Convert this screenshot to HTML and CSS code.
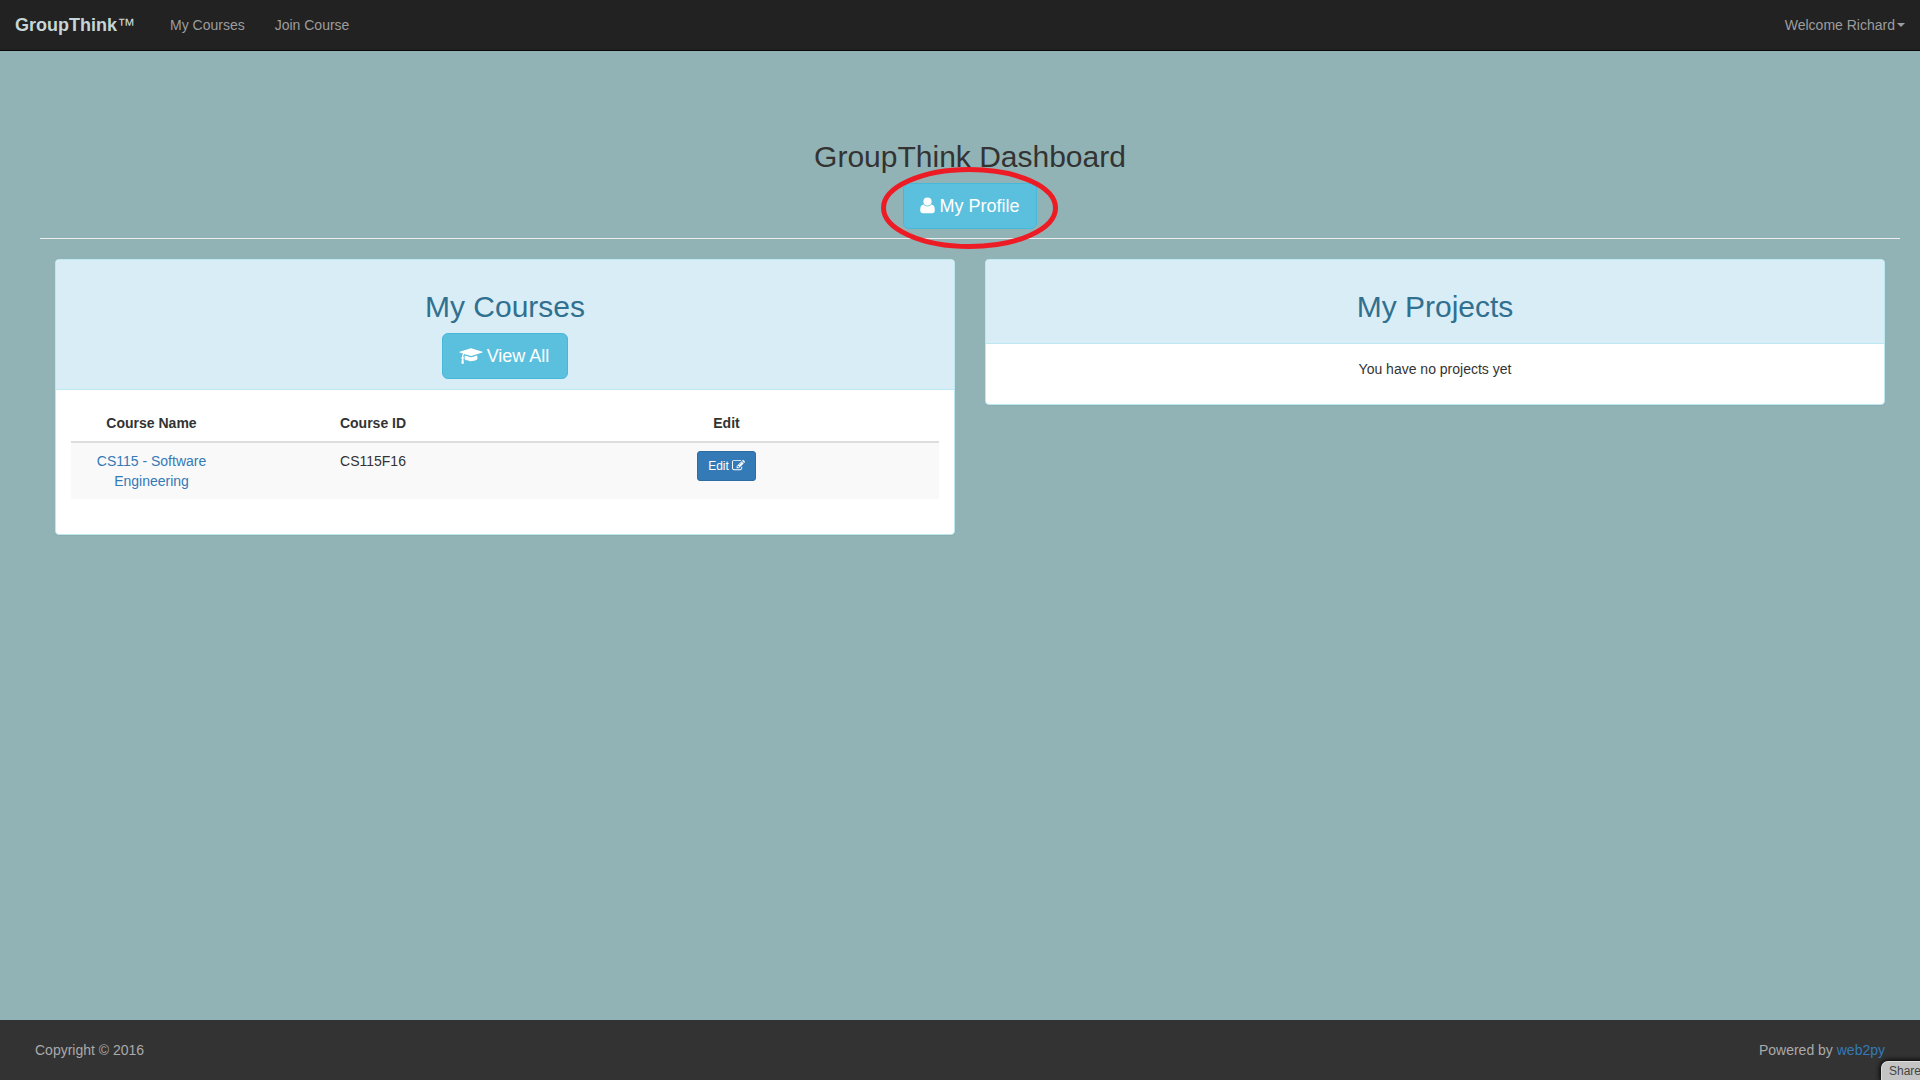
FILE: index.html
```html
<!DOCTYPE html>
<html lang="en">
<head>
<meta charset="utf-8">
<title>GroupThink Dashboard</title>
<link rel="stylesheet" href="styles.css">
</head>
<body>
<nav class="navbar">
  <a class="brand">GroupThink<span class="tm">™</span></a>
  <ul class="nav-links"><li>My Courses</li><li>Join Course</li></ul>
  <div class="user">Welcome Richard<span class="caret"></span></div>
</nav>
<main class="main">
  <header class="hero">
    <h2>GroupThink Dashboard</h2>
    <div class="profile">
      <a class="btn btn-info"><svg class="icon user-icon" width="15" height="17" viewBox="0 0 15 17"><circle cx="7.5" cy="4.6" r="4.1"/><path d="M3.6 7.6C1.2 7.7.2 10 .2 13c0 2.200 1 3.300 2.800 3.300h9c1.800 0 2.800-1.100 2.800-3.300 0-3-1-5.300-3.400-5.400C10.400 8.800 9 9.500 7.500 9.500S4.600 8.800 3.600 7.600z"/></svg>My Profile</a>
      <svg class="marker" width="178" height="84" viewBox="0 0 178 84"><ellipse cx="88.5" cy="41" rx="86" ry="38.5"/></svg>
    </div>
  </header>
  <hr class="rule">
  <div class="row">
    <section class="panel">
      <div class="panel-heading">
        <h2>My Courses</h2>
        <a class="btn btn-info"><svg class="icon" width="24" height="18" viewBox="0 0 2304 1792"><path d="M1774 836l18 316c8 141-287 256-640 256s-648-115-640-256l18-316 574 181c16 5 32 7 48 7s32-2 48-7zM2304 512c0 14-9 26-22 31l-1120 352c-4 1-7 1-10 1s-6 0-10-1L490 689c-57 45-96 155-104 290 37 21 62 61 62 109 0 45-24 84-58 106l58 433c1 9-2 18-8 25s-15 12-24 12H224c-9 0-18-5-24-12s-9-16-8-25l58-433c-34-22-58-61-58-106 0-48 26-89 64-110 7-116 37-240 101-330L22 543C9 538 0 526 0 512s9-26 22-31l1120-352c4-1 7-1 10-1s6 0 10 1l1120 352c13 5 22 17 22 31z"/></svg>View All</a>
      </div>
      <div class="panel-body">
        <table class="table">
          <thead><tr><th class="name">Course Name</th><th class="id">Course ID</th><th>Edit</th></tr></thead>
          <tbody><tr><td><a class="link">CS115 - Software Engineering</a></td><td>CS115F16</td><td><a class="btn btn-edit">Edit<svg width="13" height="13" viewBox="0 0 1792 1792"><path d="M888 1184l116-116-152-152-116 116v56h96v96h56zM1328 464c-9-9-24-8-33 1L945 815c-9 9-10 24-1 33s24 8 33-1l350-350c9-9 10-24 1-33zM1408 1058v190c0 159-129 288-288 288H288C129 1536 0 1407 0 1248V416c0-159 129-288 288-288h832c40 0 80 8 117 25 9 4 16 13 18 23 2 11-1 21-9 29l-49 49c-9 9-21 12-32 8-15-4-30-6-45-6H288c-88 0-160 72-160 160v832c0 88 72 160 160 160h832c88 0 160-72 160-160v-126c0-8 3-16 9-22l64-64c10-10 23-12 35-7s20 16 20 29zM1312 320l288 288-672 672H640V992zM1756 452l-92 92-288-288 92-92c37-37 99-37 136 0l152 152c37 37 37 99 0 136z"/></svg></a></td></tr></tbody>
        </table>
      </div>
    </section>
    <section class="panel">
      <div class="panel-heading"><h2>My Projects</h2></div>
      <div class="panel-body"><p>You have no projects yet</p></div>
    </section>
  </div>
</main>
<footer class="footer">
  <span>Copyright © 2016</span>
  <span>Powered by <a class="link">web2py</a></span>
</footer>
<div class="share">Share</div>
</body>
</html>
```
FILE: styles.css
```css
* { box-sizing: border-box; }
body {
  margin: 0;
  height: 100vh;
  display: flex;
  flex-direction: column;
  overflow: hidden;
  position: relative;
  background: #92b3b5;
  color: #333;
  font: 14px/20px "Liberation Sans", Arial, sans-serif;
}
h2 { margin: 0 0 10px; font-size: 30px; font-weight: 500; line-height: 33px; }
p { margin: 0 0 10px; }
.link { color: #337ab7; }

.navbar {
  display: flex;
  align-items: center;
  height: 51px;
  padding: 0 15px;
  background: #222;
  border-bottom: 1px solid #080808;
  color: #9d9d9d;
}
.brand { width: 155px; font-size: 18px; font-weight: bold; color: #c6d5d5; }
.tm { font-size: 18px; font-weight: normal; }
.nav-links { display: flex; gap: 30px; margin: 0; padding: 0; list-style: none; }
.user { display: flex; align-items: center; margin-left: auto; }
.caret { margin-left: 2px; border: 4px solid transparent; border-top-color: currentColor; border-bottom: 0; }

.main { flex: 1; padding: 89px 20px 0 40px; }
.hero { text-align: center; }
.profile { position: relative; height: 46px; }
.marker { position: absolute; left: 841px; top: -16px; fill: none; stroke: #ed1c24; stroke-width: 5; }
.rule { margin: 9px 0 20px; border: 0; border-top: 1px solid #eee; }
.row { display: grid; grid-template-columns: 1fr 1fr; gap: 30px; padding: 0 15px; align-items: start; }

.btn { display: inline-block; border: 1px solid; color: #fff; white-space: nowrap; vertical-align: middle; }
.btn svg { fill: currentColor; }
.btn-info {
  height: 46px;
  padding: 10px 16px;
  border-color: #46b8da;
  border-radius: 6px;
  background: #5bc0de;
  font-size: 18px;
  line-height: 24px;
}
.icon { margin-right: 4px; vertical-align: -3px; }
.user-icon { vertical-align: -2px; }
.btn-edit {
  height: 30px;
  padding: 5px 10px;
  border-color: #2e6da4;
  border-radius: 3px;
  background: #337ab7;
  font-size: 12px;
  line-height: 18px;
}
.btn-edit svg { margin-left: 3px; vertical-align: -2px; }

.panel {
  border: 1px solid #bce8f1;
  border-radius: 4px;
  background: #fff;
  box-shadow: 0 1px 1px rgba(0, 0, 0, .05);
  text-align: center;
}
.panel-heading {
  padding: 30px 15px 10px;
  border-bottom: 1px solid #bce8f1;
  border-radius: 3px 3px 0 0;
  background: #d9edf7;
  color: #31708f;
}
.panel-heading .btn { display: block; width: 126px; margin: 0 auto; padding: 10px 17px 10px 15px; }
.panel-body { padding: 15px; }

.table { width: 100%; margin-bottom: 20px; border-spacing: 0; table-layout: fixed; }
.table th { padding: 8px; border-bottom: 2px solid #ddd; }
.table td { height: 56px; padding: 8px; background: #f9f9f9; vertical-align: top; }
.table .name { width: 161px; }
.table .id { width: 282px; }

.footer {
  display: flex;
  justify-content: space-between;
  height: 60px;
  padding: 20px 35px;
  background: #333;
  color: #aaa;
}
.share {
  position: absolute;
  right: -11px;
  bottom: 0;
  width: 50px;
  height: 19px;
  padding-left: 7px;
  border: 1px solid #ddd;
  border-bottom: 0;
  border-radius: 7px 0 0 0;
  background: #c4c4c4;
  box-shadow: 0 0 5px 1px #000;
  color: #444;
  font-size: 12px;
  line-height: 19px;
}
```
